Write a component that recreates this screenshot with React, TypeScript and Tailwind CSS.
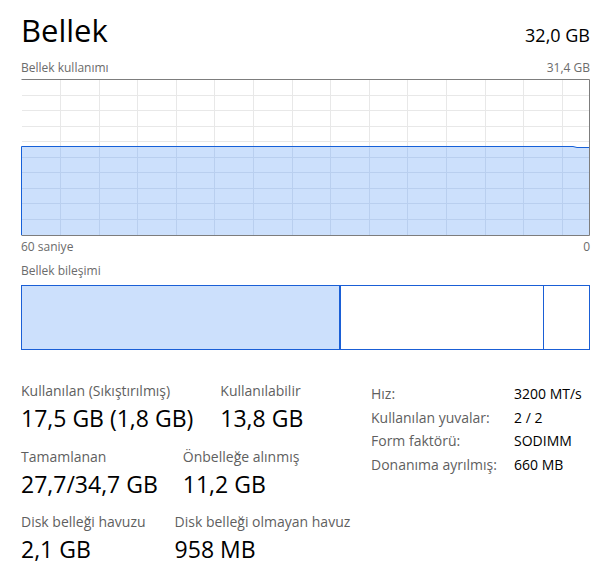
import React from 'react';

const GRAPH_W = 569;
const GRAPH_H = 156;
const FILL_Y = 67.5;

const vLines = Array.from({ length: 14 }, (_, i) => Math.round(39 + i * 38.6) + 0.5);
const hLines = Array.from({ length: 9 }, (_, i) => Math.round(15.5 * (i + 1)) + 0.5);

function UsageGraph() {
  const fillPath = `M0.5 ${FILL_Y} L552 ${FILL_Y} L556 ${FILL_Y + 1} L${GRAPH_W - 1} ${FILL_Y + 1} L${GRAPH_W - 1} ${GRAPH_H} L0.5 ${GRAPH_H} Z`;
  const linePath = `M0.5 ${GRAPH_H} L0.5 ${FILL_Y} L552 ${FILL_Y} L556 ${FILL_Y + 1} L${GRAPH_W - 1} ${FILL_Y + 1}`;
  return (
    <svg width={GRAPH_W} height={GRAPH_H + 1} className="block">
      <path d={fillPath} fill="#cce0fc" />
      {vLines.map((x) => (
        <g key={x}>
          <line x1={x} y1={1} x2={x} y2={FILL_Y} stroke="#e8e8e8" />
          <line x1={x} y1={FILL_Y + 1} x2={x} y2={GRAPH_H} stroke="#b9cfef" />
        </g>
      ))}
      {hLines.map((y) => (
        <line key={y} x1={1} y1={y} x2={GRAPH_W - 1} y2={y} stroke={y > FILL_Y ? '#b9cfef' : '#e8e8e8'} />
      ))}
      <path d={linePath} fill="none" stroke="#1660d8" strokeWidth={1} />
      <path
        d={`M0.5 0.5 H${GRAPH_W - 0.5} V${GRAPH_H + 0.5} H0.5`}
        fill="none"
        stroke="#7d7d7d"
      />
    </svg>
  );
}

function Stat({ label, value }: { label: string; value: string }) {
  return (
    <div className="flex flex-col">
      <span className="text-[14px] leading-[20px] text-[#5f5f5f]">{label}</span>
      <span className="mt-[2px] text-[23px] leading-[30px] text-black">{value}</span>
    </div>
  );
}

const details = [
  ['Hız:', '3200 MT/s'],
  ['Kullanılan yuvalar:', '2 / 2'],
  ['Form faktörü:', 'SODIMM'],
  ['Donanıma ayrılmış:', '660 MB'],
];

export default function App() {
  return (
    <div className="w-[605px] h-[583px] overflow-hidden bg-white pl-[21px] pr-[15px] font-['Open_Sans',sans-serif]">
      <div className="flex items-baseline justify-between pt-[9px]">
        <h1 className="text-[31px] leading-[42px] text-black">Bellek</h1>
        <span className="text-[18px] text-black">32,0 GB</span>
      </div>

      <div className="mt-[9px] flex justify-between text-[12px] leading-[16px] text-[#6b6b6b]">
        <span>Bellek kullanımı</span>
        <span>31,4 GB</span>
      </div>

      <div className="mt-[3px]">
        <UsageGraph />
      </div>

      <div className="mt-[3px] flex justify-between text-[12px] leading-[16px] text-[#6b6b6b]">
        <span>60 saniye</span>
        <span>0</span>
      </div>

      <div className="mt-[8px] text-[12px] leading-[16px] text-[#6b6b6b]">Bellek bileşimi</div>

      <div className="mt-[6px] flex h-[65px] border border-[#1a5fd6]">
        <div className="w-[319px] bg-[#cce0fc] border-r-2 border-[#1a5fd6]" />
        <div className="w-[203px] border-r border-[#1a5fd6]" />
        <div className="flex-1" />
      </div>

      <div className="mt-[31px] flex items-start">
        <div className="w-[350px] flex flex-col">
          <div className="flex gap-[27px]">
            <Stat label="Kullanılan (Sıkıştırılmış)" value="17,5 GB (1,8 GB)" />
            <Stat label="Kullanılabilir" value="13,8 GB" />
          </div>
          <div className="mt-[14px] flex gap-[25px]">
            <Stat label="Tamamlanan" value="27,7/34,7 GB" />
            <Stat label="Önbelleğe alınmış" value="11,2 GB" />
          </div>
          <div className="mt-[13px] flex gap-[29px]">
            <Stat label="Disk belleği havuzu" value="2,1 GB" />
            <Stat label="Disk belleği olmayan havuz" value="958 MB" />
          </div>
        </div>

        <div className="grid grid-cols-[143px_auto] pt-[1px] text-[14px] leading-[23.5px]">
          {details.map(([k, v]) => (
            <React.Fragment key={k}>
              <span className="text-[#5f5f5f]">{k}</span>
              <span className="text-black">{v}</span>
            </React.Fragment>
          ))}
        </div>
      </div>
    </div>
  );
}
